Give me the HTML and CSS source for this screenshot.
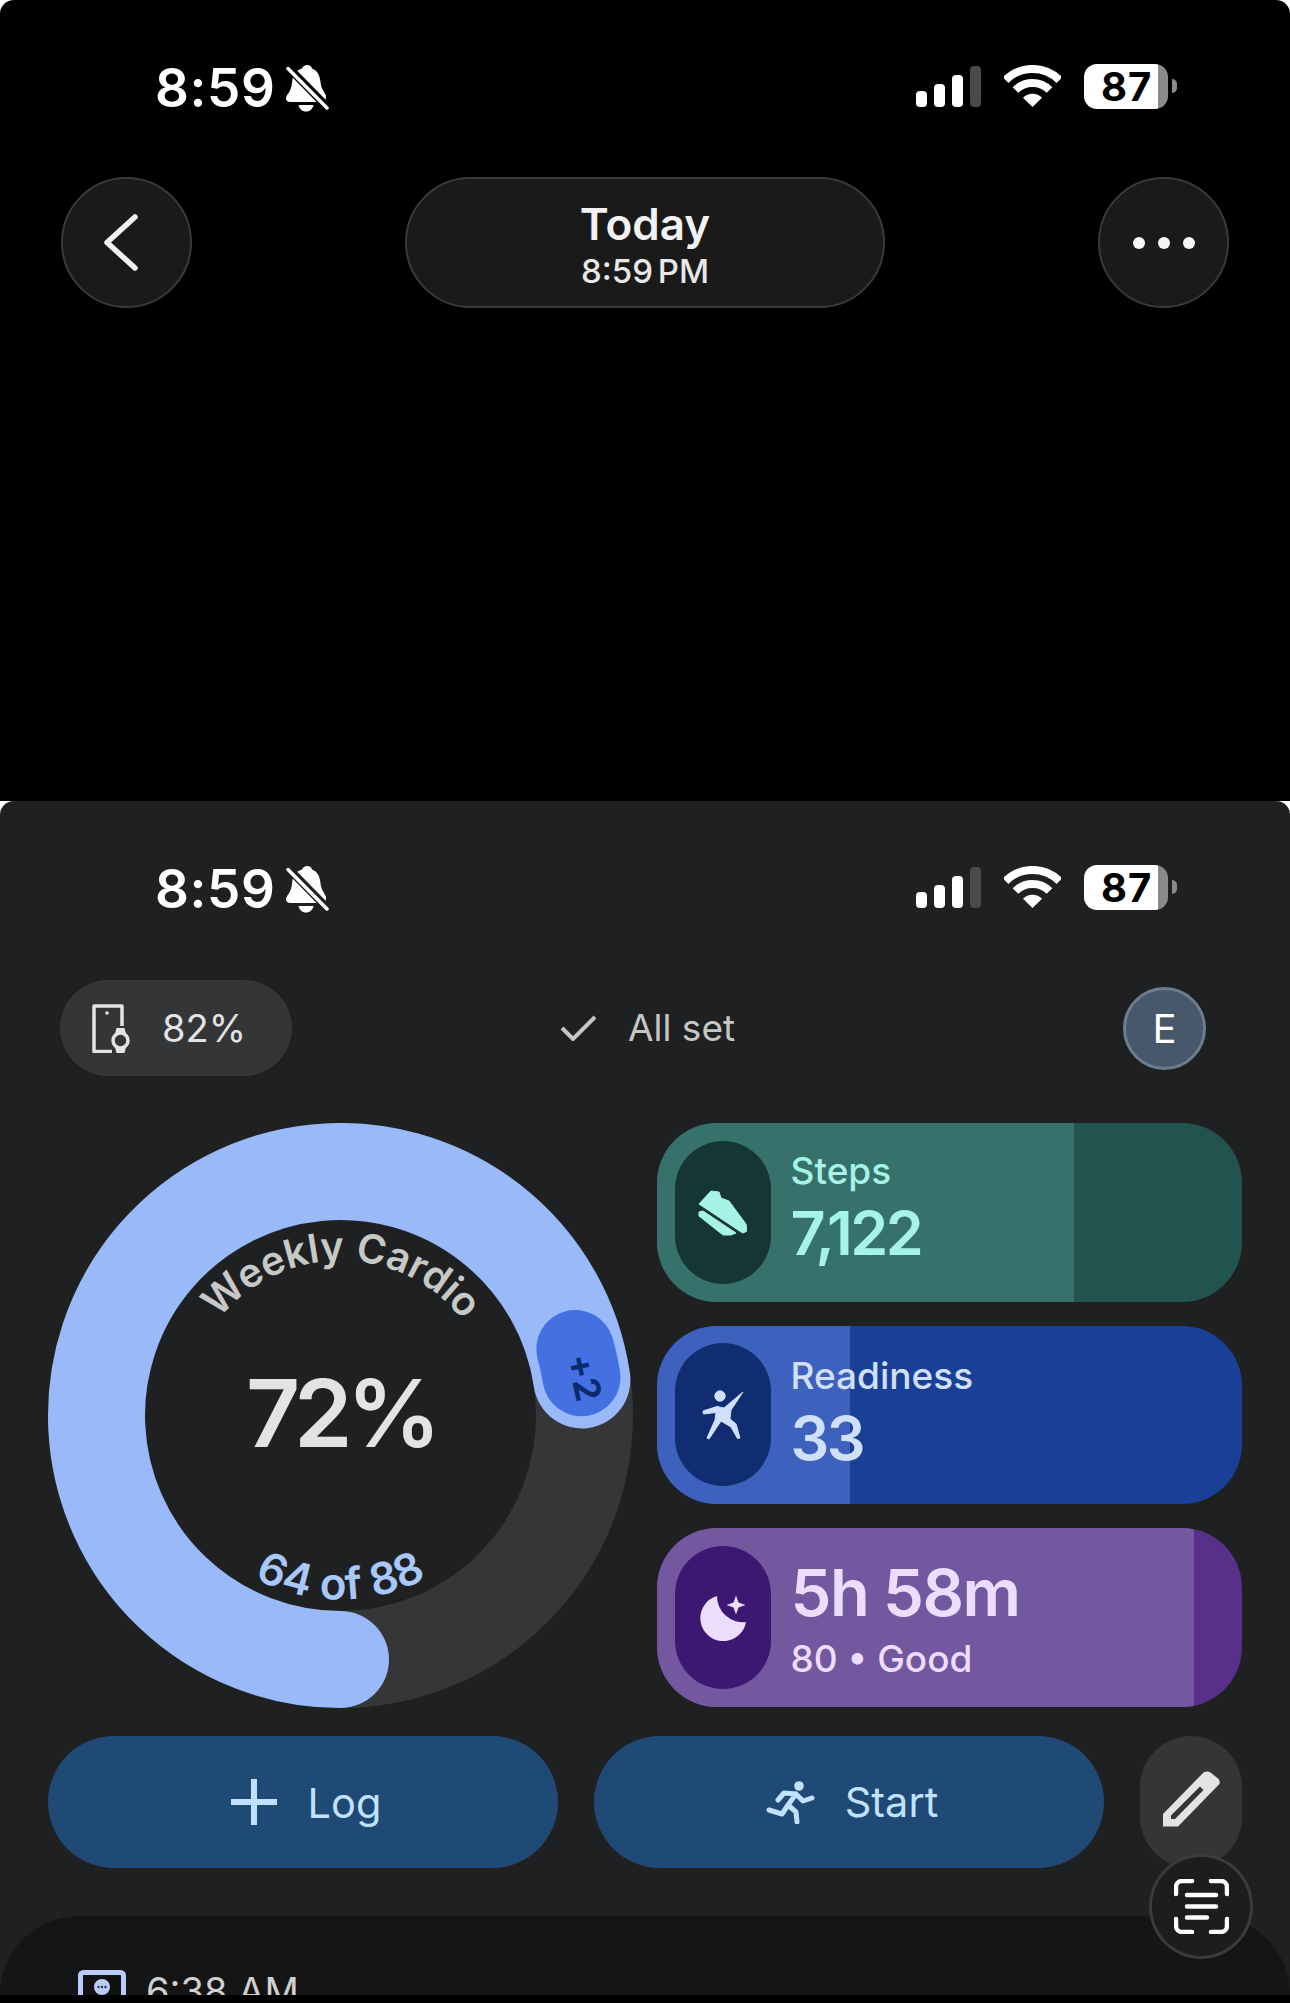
FILE: index.html
```html
<!DOCTYPE html>
<html lang="en">
<head>
<meta charset="utf-8">
<title>Today</title>
<link rel="stylesheet" href="styles.css">
</head>
<body>
<div class="page">
  <section class="screen">
    <div class="status">
      <div class="status-left">
        <span class="time">8:59</span>
        <svg class="bell" viewBox="0 0 44 47"><path class="solid" d="M21 0C24 0 25.500 1.500 26 3.500C31.500 5.500 34 11 34.500 17C35 24 38.500 27 40 30.500L40 33.500C39 36 37 37 34.500 37L4.500 37C1.500 37 0 35.500 0 33.500C0 30 4.500 27 5.500 21L6.500 14C7.500 8 11 5 16 3.500C17 1.500 19 0 21 0Z"/><path class="solid" d="M12.500 40H27.500C26.500 44 24 46.500 20 46.500S13.500 44 12.500 40Z"/><path class="bell-gap" d="M1 1L43 44"/><path class="bell-slash" d="M2 3.500L41 43"/></svg>
      </div>
      <div class="status-right">
        <svg class="signal" viewBox="0 0 65 41"><rect class="solid" x="0" y="25" width="11" height="16" rx="4"/><rect class="solid" x="18" y="18" width="11" height="23" rx="4"/><rect class="solid" x="36" y="9" width="11" height="32" rx="4"/><rect class="dim" x="54" y="0" width="11" height="41" rx="4"/></svg>
        <svg class="wifi" viewBox="0 0 57 42"><path class="wave" d="M1.600 15.100A38 38 0 0 1 55.400 15.100"/><path class="wave" d="M11.500 25A24 24 0 0 1 45.500 25"/><path class="solid" d="M28.500 42L19 32.800A13 13 0 0 1 38 32.800Z"/></svg>
        <div class="battery"><span class="battery-level">87</span></div>
        <span class="battery-nub"></span>
      </div>
    </div>
    <div class="nav">
      <div class="nav-round">
        <svg class="chevron" viewBox="0 0 34 57"><path d="M31 3L3 28.500L31 54"/></svg>
      </div>
      <div class="nav-title">
        <span class="nav-day">Today</span>
        <span class="nav-time">8:59 PM</span>
      </div>
      <div class="nav-round nav-dots"><i></i><i></i><i></i></div>
    </div>
  </section>

  <div class="lower">
    <section class="panel">
      <div class="status">
        <div class="status-left">
          <span class="time">8:59</span>
          <svg class="bell" viewBox="0 0 44 47"><path class="solid" d="M21 0C24 0 25.500 1.500 26 3.500C31.500 5.500 34 11 34.500 17C35 24 38.500 27 40 30.500L40 33.500C39 36 37 37 34.500 37L4.500 37C1.500 37 0 35.500 0 33.500C0 30 4.500 27 5.500 21L6.500 14C7.500 8 11 5 16 3.500C17 1.500 19 0 21 0Z"/><path class="solid" d="M12.500 40H27.500C26.500 44 24 46.500 20 46.500S13.500 44 12.500 40Z"/><path class="bell-gap" d="M1 1L43 44"/><path class="bell-slash" d="M2 3.500L41 43"/></svg>
        </div>
        <div class="status-right">
          <svg class="signal" viewBox="0 0 65 41"><rect class="solid" x="0" y="25" width="11" height="16" rx="4"/><rect class="solid" x="18" y="18" width="11" height="23" rx="4"/><rect class="solid" x="36" y="9" width="11" height="32" rx="4"/><rect class="dim" x="54" y="0" width="11" height="41" rx="4"/></svg>
          <svg class="wifi" viewBox="0 0 57 42"><path class="wave" d="M1.600 15.100A38 38 0 0 1 55.400 15.100"/><path class="wave" d="M11.500 25A24 24 0 0 1 45.500 25"/><path class="solid" d="M28.500 42L19 32.800A13 13 0 0 1 38 32.800Z"/></svg>
          <div class="battery"><span class="battery-level">87</span></div>
          <span class="battery-nub"></span>
        </div>
      </div>

      <div class="top-row">
        <div class="device-chip">
          <svg class="device-icon" viewBox="0 0 38 49"><path class="device-line" d="M30 22V2H2V47.500H20"/><circle class="device-dot" cx="15" cy="9" r="1.800"/><circle class="device-line" cx="28.500" cy="36.500" r="7.500"/><path class="device-lug" d="M23 30L24.500 24H32.500L34 30Z"/><path class="device-lug" d="M23 43L24.500 49H32.500L34 43Z"/></svg>
          <span class="device-level">82%</span>
        </div>
        <div class="all-set">
          <svg class="check" viewBox="0 0 37 26"><path d="M2 13L13 24L35 2"/></svg>
          <span>All set</span>
        </div>
        <div class="avatar">E</div>
      </div>

      <div class="main-row">
        <svg class="ring" viewBox="0 0 585 585">
          <circle class="ring-track" cx="292.500" cy="292.500" r="244"/>
          <path class="ring-value" d="M292.500 536.500A244 244 0 1 1 533.900 256.900"/>
          <path class="ring-extra" d="M527.300 226.100A244 244 0 0 1 533.500 254.300"/>
          <defs>
            <path id="arc-top" d="M137.500 292.500A155 155 0 0 1 447.500 292.500"/>
            <path id="arc-bottom" d="M108.500 292.500A184 184 0 0 0 476.500 292.500"/>
          </defs>
          <g transform="rotate(0.400 292.500 292.500)">
            <text class="ring-title"><textPath href="#arc-top" startOffset="50%">Weekly Cardio</textPath></text>
          </g>
          <text class="ring-percent" x="292.500" y="324">72%</text>
          <text class="ring-count"><textPath href="#arc-bottom" startOffset="50%">64 of 88</textPath></text>
          <text class="ring-bonus" transform="rotate(78 536 255)" x="536" y="267">+2</text>
        </svg>

        <div class="cards">
          <div class="card card-steps">
            <span class="card-fill" style="width:71.3%"></span>
            <div class="card-icon">
              <svg class="icon-shoe" viewBox="0 0 49 47"><path d="M1 15L13 2L21 3L23 9L31 12L48 35L49 42L45 44L43 43Z"/><path d="M1 23L5 22L38 44L33 46L25 46L1 27Z"/></svg>
            </div>
            <div class="card-text card-text-raised">
              <span class="label">Steps</span>
              <span class="value">7,122</span>
            </div>
          </div>
          <div class="card card-ready">
            <span class="card-fill" style="width:33%"></span>
            <div class="card-icon">
              <svg class="icon-person" viewBox="0 0 42 50"><circle cx="18" cy="6" r="5.200"/><path d="M1 21L15 16.500L22 18L41 2L29 20L28 29L34 34L38 48L35.500 48.500L29 37L19 31L7 49L5 48L13 30L14 22.500L1.500 24Z"/></svg>
            </div>
            <div class="card-text">
              <span class="label">Readiness</span>
              <span class="value">33</span>
            </div>
          </div>
          <div class="card card-sleep">
            <span class="card-fill" style="width:91.800%"></span>
            <div class="card-icon">
              <svg class="icon-moon" viewBox="0 0 49 46"><path d="M19 1A23 23 0 1 0 48 27A26 26 0 0 1 19 1Z"/><path d="M38 .500L40.500 7.500L47.500 10L40.500 12.500L38 19.500L35.500 12.500L28.500 10L35.500 7.500Z"/></svg>
            </div>
            <div class="card-text">
              <span class="value value-first">5h 58m</span>
              <span class="label">80 • Good</span>
            </div>
          </div>
        </div>
      </div>

      <div class="actions">
        <div class="action">
          <svg class="icon-plus" viewBox="0 0 46 46"><path d="M23 0V46M0 23H46"/></svg>
          <span class="action-log">Log</span>
        </div>
        <div class="action">
          <svg class="icon-run" viewBox="0 0 49 43"><circle class="run-head" cx="33" cy="5" r="4.800"/><path d="M30 13L22 24L30 31L31 41M22 24L16 33L3 29M30 13L18 12L12 19M30 13L37 20L46 17"/></svg>
          <span class="action-start">Start</span>
        </div>
        <div class="edit">
          <svg class="icon-pencil" viewBox="0 0 57 56"><path d="M0 55.500V43L40 2C42 0 45.500 0 47.500 1.500L55 7.500C57 9.500 57.500 12 55.500 14L15 55.500ZM8 48L12 48L40.500 19L37 15.500L8 44.500Z"/></svg>
        </div>
      </div>

      <div class="sheet">
        <svg class="sheet-icon" viewBox="0 0 48 48"><rect class="sheet-frame" x="2.500" y="2.500" width="43" height="43" rx="3"/><circle class="sheet-face" cx="24" cy="17" r="8"/><circle class="sheet-pip" cx="20.500" cy="17" r="1.200"/><circle class="sheet-pip" cx="24" cy="17" r="1.200"/><circle class="sheet-pip" cx="27.500" cy="17" r="1.200"/></svg>
        <span class="sheet-time">6:38 AM</span>
      </div>

      <div class="scan">
        <svg class="icon-scan" viewBox="0 0 55 55"><path d="M2 15V8A6 6 0 0 1 8 2H18M37 2H47A6 6 0 0 1 53 8V15M2 40V47A6 6 0 0 0 8 53H18M37 53H47A6 6 0 0 0 53 47V40M13 16H42M13 27.500H42M13 38.500H33"/></svg>
      </div>
    </section>
  </div>
  <div class="bottom-edge"></div>
</div>
</body>
</html>
```

FILE: styles.css
```css
* { box-sizing: border-box; }
html, body { margin: 0; padding: 0; background: #000; }
body { font-family: "Inter", "Liberation Sans", sans-serif; color: #fff; }
.page { width: 1290px; height: 2003px; overflow: hidden; background: #fff; }

.screen {
  --surface: #000;
  height: 801px;
  background: #000;
  border-radius: 14px 14px 0 0;
  padding-top: 64px;
}
.lower { background: #fff; height: 1194px; }
.panel {
  --surface: #1f2022;
  position: relative;
  height: 1194px;
  padding-top: 64px;
  background: #1f2022;
  border-radius: 14px 14px 0 0;
  overflow: hidden;
}
.bottom-edge { height: 8px; background: #000; }

.status { display: flex; justify-content: space-between; align-items: flex-start; height: 47px; padding: 0 113px 0 155px; }
.status-left { display: flex; align-items: flex-start; gap: 11px; }
.time { font-size: 53px; font-weight: 600; line-height: 48px; letter-spacing: .6px; }
.bell { width: 44px; height: 47px; margin-top: 1px; }
.solid { fill: #fff; }
.dim { fill: #4a4a4a; }
.bell-gap { stroke: var(--surface); stroke-width: 8; fill: none; }
.bell-slash { stroke: #fff; stroke-width: 3.500; stroke-linecap: round; fill: none; }
.status-right { display: flex; align-items: flex-start; }
.signal { width: 65px; height: 41px; margin-top: 2px; }
.wifi { width: 57px; height: 42px; margin-left: 23px; margin-top: 1px; }
.wave { fill: none; stroke: #fff; stroke-width: 8; }
.battery {
  width: 84px; height: 45px; margin-left: 23px;
  border-radius: 13px;
  background: linear-gradient(90deg, #fff 0, #fff 88%, #8a8a8a 88%);
  display: flex; align-items: center; padding-left: 17px;
}
.battery-level { color: #000; font-size: 40px; font-weight: 700; line-height: 45px; letter-spacing: 1px; }
.battery-nub { width: 5px; height: 14px; margin: 15px 0 0 4px; background: #8a8a8a; border-radius: 0 7px 7px 0; }

.nav { display: flex; justify-content: space-between; padding: 0 61px; margin-top: 66px; }
.nav-round {
  width: 131px; height: 131px; border-radius: 50%;
  background: #1a1a1a; border: 2px solid #3a3a3a;
  display: flex; align-items: center; justify-content: center;
}
.chevron { width: 34px; height: 57px; margin-left: -12px; fill: none; stroke: #f2f2f2; stroke-width: 5.500; stroke-linecap: round; stroke-linejoin: round; }
.nav-dots { gap: 13px; }
.nav-dots i { width: 12px; height: 12px; border-radius: 50%; background: #f5f5f5; }
.nav-title {
  width: 480px; height: 131px; border-radius: 66px;
  background: #1a1a1a; border: 2px solid #3a3a3a;
  display: flex; flex-direction: column; align-items: center; justify-content: center;
  padding-top: 2px;
}
.nav-day { font-size: 44px; font-weight: 600; line-height: 52px; color: #f2f2f2; }
.nav-time { font-size: 33px; font-weight: 500; line-height: 38px; color: #e8e8e8; word-spacing: -4px; margin-top: 2px; }

.top-row {
  display: grid; grid-template-columns: 499px 175px 1fr; align-items: center;
  height: 96px; margin-top: 68px; padding: 0 84px 0 60px;
}
.device-chip {
  width: 232px; height: 96px; border-radius: 48px; background: #343537;
  display: flex; align-items: center; padding-left: 32px; gap: 32px;
}
.device-icon { width: 38px; height: 49px; }
.device-line { fill: none; stroke: #e3e3e3; stroke-width: 3.500; stroke-linejoin: round; }
.device-dot, .device-lug { fill: #e3e3e3; }
.device-level { font-size: 38px; color: #e3e3e3; line-height: 46px; }
.all-set { display: flex; align-items: center; gap: 31px; font-size: 37px; color: #c4c7c5; line-height: 44px; white-space: nowrap; padding-left: 1px; }
.check { width: 37px; height: 26px; fill: none; stroke: #c4c7c5; stroke-width: 4; flex: none; }
.avatar {
  justify-self: end;
  width: 83px; height: 83px; border-radius: 50%;
  background: #46586a; border: 3px solid #6b7d8e;
  display: flex; align-items: center; justify-content: center;
  font-size: 40px; color: #fff;
}

.main-row { display: flex; gap: 24px; height: 584px; margin-top: 47px; padding-left: 48px; }
.ring { width: 585px; height: 585px; flex: none; }
.ring-track { fill: none; stroke: #353638; stroke-width: 97; }
.ring-value { fill: none; stroke: #99b9f8; stroke-width: 97; stroke-linecap: round; }
.ring-extra { fill: none; stroke: #4470e2; stroke-width: 78; stroke-linecap: round; }
.ring-title { font-size: 40px; font-weight: 600; fill: #c7c9c7; text-anchor: middle; }
.ring-percent { font-size: 94px; font-weight: 600; fill: #e3e3e3; text-anchor: middle; letter-spacing: -6px; }
.ring-count { font-size: 44px; font-weight: 600; fill: #a8c7fa; text-anchor: middle; }
.ring-bonus { font-size: 36px; font-weight: 700; fill: #0b2a6e; text-anchor: middle; letter-spacing: 1px; }

.cards { width: 585px; display: flex; flex-direction: column; gap: 24px; }
.card {
  position: relative; height: 178.670px; border-radius: 60px; overflow: hidden;
  display: flex; align-items: center; padding-left: 18px; gap: 20px;
}
.card-fill { position: absolute; left: 0; top: 0; bottom: 0; }
.card-icon {
  position: relative; width: 95.500px; height: 143px; border-radius: 48px;
  display: flex; align-items: center; justify-content: center; flex: none;
}
.card-text { position: relative; display: flex; flex-direction: column; }
.card-text-raised { padding-bottom: 5px; }
.label { font-size: 37px; font-weight: 500; line-height: 42px; white-space: nowrap; }
.value { font-size: 61px; font-weight: 600; line-height: 74px; letter-spacing: -2.500px; white-space: nowrap; margin-top: 4px; }
.value-first { font-size: 65px; margin-top: 0; margin-bottom: 8px; letter-spacing: -1.500px; }
.card-steps { background: #23534e; color: #a6f3e8; }
.card-steps .card-fill { background: #36716b; }
.card-steps .card-icon { background: #153633; }
.card-ready { background: #1a3f96; color: #d0e0fb; }
.card-ready .card-fill { background: #3e61bd; }
.card-ready .card-icon { background: #0f2d70; }
.card-sleep { background: #573089; color: #ecdcfd; }
.card-sleep .card-fill { background: #73579f; }
.card-sleep .card-icon { background: #3d1873; }
.icon-shoe { width: 49px; height: 47px; fill: #a6f3e8; stroke: #a6f3e8; stroke-width: 1; stroke-linejoin: round; }
.icon-person { width: 42px; height: 50px; fill: #d0e0fb; stroke: #d0e0fb; stroke-width: 1; stroke-linejoin: round; }
.icon-moon { width: 49px; height: 46px; fill: #ecdcfd; }

.actions { display: flex; gap: 36px; margin-top: 29px; padding-left: 48px; }
.action {
  width: 510px; height: 132px; border-radius: 66px; background: #1f4a75;
  display: flex; align-items: center; justify-content: center; color: #c2e0ff;
  font-size: 41.500px; line-height: 48px; padding-left: 6px;
}
.icon-plus { width: 46px; height: 46px; margin-right: 31px; fill: none; stroke: #c2e0ff; stroke-width: 6; }
.action-log { margin-top: 2px; }
.icon-run { width: 49px; height: 43px; margin-right: 30px; fill: none; stroke: #c2e0ff; stroke-width: 5; stroke-linecap: round; stroke-linejoin: round; }
.run-head { fill: #c2e0ff; stroke: none; }
.edit {
  width: 102px; height: 132px; border-radius: 51px; background: #343537;
  display: flex; align-items: center; justify-content: center; padding-bottom: 6px;
}
.icon-pencil { width: 57px; height: 56px; fill: #e3e3e3; fill-rule: evenodd; }

.sheet {
  height: 79px; margin-top: 48px; padding: 54px 0 0 78px;
  background: #141517; border-radius: 80px 80px 0 0; overflow: hidden;
  display: flex; align-items: flex-start; gap: 20px;
}
.sheet-icon { width: 48px; height: 48px; flex: none; }
.sheet-frame { fill: #111; stroke: #b9ccf9; stroke-width: 5; }
.sheet-face { fill: #b9ccf9; }
.sheet-pip { fill: #1a2a55; }
.sheet-time { font-size: 38px; line-height: 46px; color: #d0d0d0; white-space: nowrap; margin-top: -2px; }

.scan {
  position: absolute; left: 1149px; top: 1053px;
  width: 104px; height: 105px; border-radius: 50%;
  background: #1c1d1f; border: 3px solid #3a3b3d;
  display: flex; align-items: center; justify-content: center;
}
.icon-scan { width: 55px; height: 55px; fill: none; stroke: #fff; stroke-width: 4.500; stroke-linecap: round; }
```
